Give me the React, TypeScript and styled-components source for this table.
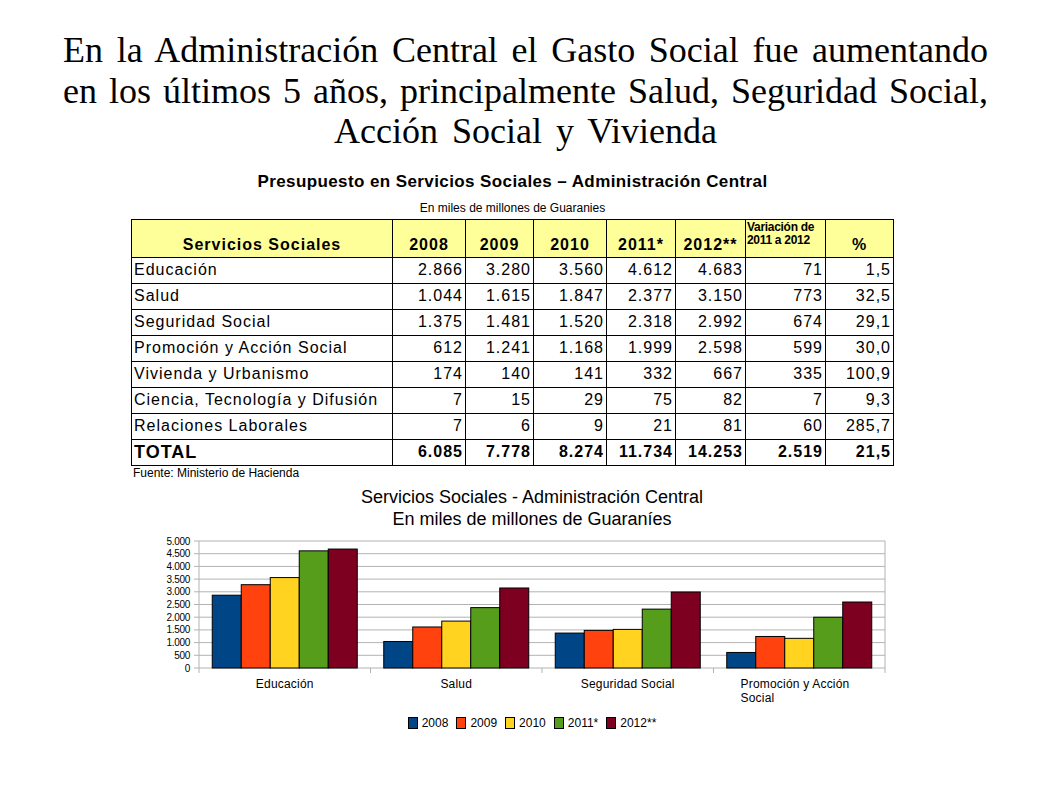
import React from 'react'
import styled, { createGlobalStyle } from 'styled-components'

const GlobalStyle = createGlobalStyle`
    html, body {
        margin: 0;
        padding: 0;
        background: #ffffff;
    }
`

const years = ['2008', '2009', '2010', '2011*', '2012**']
const colors = ['#004586', '#ff420e', '#ffd320', '#579d1c', '#7e0021']

const rows = [
    ['Educación', '2.866', '3.280', '3.560', '4.612', '4.683', '71', '1,5'],
    ['Salud', '1.044', '1.615', '1.847', '2.377', '3.150', '773', '32,5'],
    ['Seguridad Social', '1.375', '1.481', '1.520', '2.318', '2.992', '674', '29,1'],
    ['Promoción y Acción Social', '612', '1.241', '1.168', '1.999', '2.598', '599', '30,0'],
    ['Vivienda y Urbanismo', '174', '140', '141', '332', '667', '335', '100,9'],
    ['Ciencia, Tecnología y Difusión', '7', '15', '29', '75', '82', '7', '9,3'],
    ['Relaciones Laborales', '7', '6', '9', '21', '81', '60', '285,7'],
]
const total = ['TOTAL', '6.085', '7.778', '8.274', '11.734', '14.253', '2.519', '21,5']

const colWidths = [261, 73, 68, 73, 69, 70, 80, 68]

const groups = [
    { label: ['Educación'], values: [2866, 3280, 3560, 4612, 4683] },
    { label: ['Salud'], values: [1044, 1615, 1847, 2377, 3150] },
    { label: ['Seguridad Social'], values: [1375, 1481, 1520, 2318, 2992] },
    { label: ['Promoción y Acción', 'Social'], values: [612, 1241, 1168, 1999, 2598] },
]

export default function App() {
    return (
    <Page>
        <GlobalStyle />
        <Heading>
            <HeadLine>En la Administración Central el Gasto Social fue aumentando</HeadLine>
            <HeadLine>en los últimos 5 años, principalmente Salud, Seguridad Social,</HeadLine>
            <HeadLine $last>Acción Social y Vivienda</HeadLine>
        </Heading>

        <TableBlock>
            <TableTitle>Presupuesto en Servicios Sociales – Administración Central</TableTitle>
            <TableSubtitle>En miles de millones de Guaranies</TableSubtitle>
            <Table>
                <colgroup>
                    {colWidths.map((w, i) => <col key={i} style={{ width: w }} />)}
                </colgroup>
                <thead>
                    <tr>
                        <HeadCell>Servicios Sociales</HeadCell>
                        {years.map(y => <HeadCell key={y}>{y}</HeadCell>)}
                        <SmallHeadCell>Variación de<br />2011 a 2012</SmallHeadCell>
                        <HeadCell>%</HeadCell>
                    </tr>
                </thead>
                <tbody>
                    {rows.map(r => (
                        <tr key={r[0]}>
                            <LabelCell>{r[0]}</LabelCell>
                            {r.slice(1).map((v, i) => <NumCell key={i}>{v}</NumCell>)}
                        </tr>
                    ))}
                    <tr>
                        <LabelCell $bold>{total[0]}</LabelCell>
                        {total.slice(1).map((v, i) => <NumCell key={i} $bold>{v}</NumCell>)}
                    </tr>
                </tbody>
            </Table>
            <Source>Fuente: Ministerio de Hacienda</Source>
        </TableBlock>

        <ChartBlock>
            <ChartTitle>Servicios Sociales - Administración Central<br />En miles de millones de Guaraníes</ChartTitle>
            <BarChart />
            <Legend>
                {years.map((y, i) => (
                    <LegendItem key={y}>
                        <Swatch $color={colors[i]} />
                        {y}
                    </LegendItem>
                ))}
            </Legend>
        </ChartBlock>
    </Page>
    )
}

function BarChart() {
    const left = 59
    const right = 745
    const top = 10
    const bottom = 137
    const h = bottom - top
    const gw = (right - left) / groups.length
    const bw = 29
    const inset = (gw - bw * 5) / 2
    const ticks = Array.from({ length: 11 }, (_, i) => i * 500)
    const font = "'Liberation Sans', Arial, sans-serif"

    return (
    <svg width="750" height="180" viewBox="0 0 750 180" style={{ display: 'block' }}>
        {ticks.map(t => {
            const y = bottom - (t / 5000) * h
            return (
            <g key={t}>
                <line x1={left - 5} x2={right} y1={y} y2={y} stroke="#b3b3b3" strokeWidth="1" />
                <text x={left - 9} y={y + 3.5} textAnchor="end" fontSize="10" fontFamily={font} fill="#000" letterSpacing="-0.3">
                    {t === 0 ? '0' : t.toLocaleString('de-DE')}
                </text>
            </g>
            )
        })}
        <line x1={left} x2={left} y1={top} y2={bottom + 5} stroke="#b3b3b3" />
        <line x1={right} x2={right} y1={top} y2={bottom} stroke="#b3b3b3" />
        {groups.map((g, gi) => {
            const gx = left + gi * gw
            return (
            <g key={gi}>
                <line x1={gx + gw} x2={gx + gw} y1={bottom} y2={bottom + 5} stroke="#b3b3b3" />
                {g.values.map((v, i) => {
                    const bh = (v / 5000) * h
                    return (
                    <rect key={i} x={gx + inset + i * bw} y={bottom - bh} width={bw} height={bh}
                        fill={colors[i]} stroke="#000" strokeWidth="1" />
                    )
                })}
                {g.label.map((l, li) => (
                    <text key={li} x={gi === 3 ? gx + 27 : gx + gw / 2} y={157 + li * 14}
                        textAnchor={gi === 3 ? 'start' : 'middle'} fontSize="12" fontWeight="500"
                        fontFamily={font} fill="#000" letterSpacing="0.2">
                        {l}
                    </text>
                ))}
            </g>
            )
        })}
    </svg>
    )
}

const Page = styled.div`
    width: 1058px;
    padding-top: 30px;
    color: #000;
`

const Heading = styled.div`
    width: 925px;
    margin-left: 63px;
    font-family: 'Liberation Serif', 'Times New Roman', serif;
    font-size: 36px;
    line-height: 40.5px;
`

const HeadLine = styled.div<{ $last?: boolean }>`
    text-align: ${p => p.$last ? 'center' : 'justify'};
    text-align-last: ${p => p.$last ? 'center' : 'justify'};
    word-spacing: ${p => p.$last ? '5px' : '0'};
    white-space: nowrap;
`

const TableBlock = styled.div`
    width: 763px;
    margin: 20px 0 0 131px;
    font-family: 'Liberation Sans', Arial, sans-serif;
`

const TableTitle = styled.div`
    text-align: center;
    font-size: 17px;
    font-weight: bold;
    line-height: 20px;
    letter-spacing: 0.4px;
`

const TableSubtitle = styled.div`
    text-align: center;
    font-size: 12px;
    line-height: 14px;
    margin: 9px 0 4px;
`

const Table = styled.table`
    border-collapse: collapse;
    table-layout: fixed;
    width: 763px;
    font-size: 16px;
    letter-spacing: 1px;

    td, th {
        border: 1px solid #000;
        padding: 0 2px;
        line-height: 1;
        white-space: nowrap;
    }
`

const HeadCell = styled.th`
    height: 32px;
    background: #ffff99;
    font-weight: bold;
    text-align: center;
    vertical-align: bottom;
    padding-bottom: 4px !important;
`

const SmallHeadCell = styled.th`
    height: 36px;
    background: #ffff99;
    font-weight: bold;
    font-size: 12px;
    letter-spacing: -0.3px;
    line-height: 13px !important;
    text-align: left;
    vertical-align: top;
    padding: 1px 0 0 1px !important;
`

const LabelCell = styled.td<{ $bold?: boolean }>`
    height: 25px;
    text-align: left;
    font-weight: ${p => p.$bold ? 'bold' : 'normal'};
    font-size: ${p => p.$bold ? '18px' : '16px'};
`

const NumCell = styled.td<{ $bold?: boolean }>`
    height: 25px;
    text-align: right;
    font-weight: ${p => p.$bold ? 'bold' : 'normal'};
`

const Source = styled.div`
    font-size: 12px;
    line-height: 14px;
    padding-left: 2px;
`

const ChartBlock = styled.div`
    width: 750px;
    margin: 6px 0 0 140px;
    font-family: 'Liberation Sans', Arial, sans-serif;
`

const ChartTitle = styled.div`
    text-align: center;
    font-size: 18px;
    line-height: 22px;
    margin-left: 34px;
    margin-bottom: 1px;
`

const Legend = styled.div`
    display: flex;
    justify-content: center;
    gap: 8px;
    margin-top: 5px;
    margin-left: 34px;
    font-size: 12px;
    line-height: 14px;
`

const LegendItem = styled.div`
    display: flex;
    align-items: center;
    gap: 4px;
`

const Swatch = styled.span<{ $color: string }>`
    width: 8px;
    height: 10px;
    background: ${p => p.$color};
    border: 1px solid #000;
`
